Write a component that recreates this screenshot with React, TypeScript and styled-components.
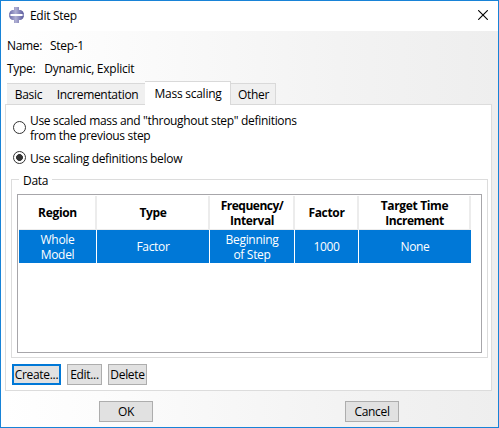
import React from "react";
import styled, { createGlobalStyle } from "styled-components";

const Global = createGlobalStyle`
  * { box-sizing: border-box; }
  body { margin: 0; overflow: hidden; }
`;

const Dialog = styled.div`
  width: 499px;
  height: 428px;
  border: 1px solid #1883d7;
  display: flex;
  flex-direction: column;
  background: linear-gradient(90deg, #ffffff 0%, #fcfcfc 20%, #f3f3f3 68%, #eeeeee 100%);
  font: 12px/15px "Open Sans", "Noto Sans", sans-serif;
  color: #000;
  white-space: nowrap;
`;

const TitleBar = styled.header`
  height: 30px;
  flex: none;
  display: flex;
  align-items: center;
  background: #fff;
  padding: 0 10px 2px 8px;
`;

const Title = styled.span`
  margin-left: 5px;
  padding-top: 1px;
  flex: 1;
  letter-spacing: -0.3px;
`;

const Text = styled.span<{ $spacing?: number }>`
  display: block;
  letter-spacing: ${(p) => p.$spacing ?? -0.32}px;
`;

const Info = styled.div`
  height: 50px;
  flex: none;
  padding: 3px 0 0 6px;
  line-height: 23px;
`;

const InfoRow = styled.div<{ $gap: number }>`
  display: flex;
  height: 23px;
  gap: ${(p) => p.$gap}px;
`;

const TabStrip = styled.nav`
  display: flex;
  align-items: flex-end;
  height: 24px;
  flex: none;
  margin: 0 0 -1px 6px;
`;

const Tab = styled.div<{ $width: number; $active?: boolean; $edge?: boolean }>`
  width: ${(p) => p.$width}px;
  height: ${(p) => (p.$active ? 24 : 22)}px;
  line-height: ${(p) => (p.$active ? 23 : 21)}px;
  padding-left: 1px;
  text-align: center;
  position: relative;
  z-index: 1;
  background: ${(p) => (p.$active ? "#fff" : "#f0f0f0")};
  border: solid #d9d9d9;
  border-width: ${(p) => (p.$active ? "1px 1px 0" : p.$edge ? "1px 1px 1px 0" : "1px 0 1px 0")};
  & + & { border-left-width: ${(p) => (p.$edge ? 0 : 1)}px; }
`;

const Panel = styled.main`
  width: 487px;
  height: 287px;
  flex: none;
  margin-left: 4px;
  border: 1px solid #dcdcdc;
  background: #fff;
  display: flex;
  flex-direction: column;
  padding: 7px 3px 5px 5px;
`;

const Option = styled.label<{ $height: number; $gap: number }>`
  display: flex;
  align-items: center;
  gap: 4px;
  padding-left: 2px;
  height: ${(p) => p.$height}px;
  margin-bottom: ${(p) => p.$gap}px;
`;

const OptionText = styled(Text)`
  padding-top: 2px;
`;

const Radio = styled.span<{ $on?: boolean }>`
  width: 13px;
  height: 13px;
  flex: none;
  border: 1px solid #333;
  border-radius: 50%;
  background: ${(p) => (p.$on ? "radial-gradient(circle, #333 0 3.1px, #fff 3.7px)" : "#fff")};
`;

const Group = styled.fieldset`
  margin: 0;
  height: 186px;
  width: 477px;
  min-width: 0;
  border: 1px solid #dcdcdc;
  padding: 7px 5px 5px;
`;

const Legend = styled.legend`
  margin-left: 2px;
  padding: 1px 4px 0;
  height: 15px;
`;

const TableBox = styled.div`
  width: 465px;
  height: 159px;
  border: 1px solid #a7a6aa;
  padding: 1px;
`;

const Grid = styled.div<{ $header?: boolean }>`
  display: grid;
  grid-template-columns: 78px 113px 85px 64px 112px;
  height: ${(p) => (p.$header ? 34 : 33)}px;
  width: 452px;
  color: ${(p) => (p.$header ? "#000" : "#fff")};
  background: ${(p) => (p.$header ? "#fff" : "#0078d7")};
  font-weight: ${(p) => (p.$header ? 700 : 400)};
`;

const HeadCell = styled.div`
  display: flex;
  flex-direction: column;
  align-items: center;
  justify-content: center;
  padding-left: 1px;
  border-right: 2px solid #ececec;
  border-bottom: 1px solid #ececec;
`;

const Cell = styled.div`
  display: flex;
  flex-direction: column;
  align-items: center;
  justify-content: center;
  border-right: 1px solid #fff;
  &:last-child { border-right: 0; }
`;

const Actions = styled.div`
  display: flex;
  gap: 6px;
  margin: 6px 0 0 1px;
`;

const Footer = styled.footer`
  display: flex;
  gap: 192px;
  padding: 10px 0 0 98px;
`;

const Button = styled.button<{ $width: number; $focus?: boolean }>`
  width: ${(p) => p.$width}px;
  height: 21px;
  padding: 0;
  display: flex;
  align-items: center;
  justify-content: center;
  font: inherit;
  color: #000;
  background: #e1e1e1;
  border: ${(p) => (p.$focus ? "2px solid #0078d7" : "1px solid #adadad")};
`;

const AppIcon = () => (
  <svg width="16" height="16" viewBox="0 0 16 16">
    <defs>
      <linearGradient id="steel">
        <stop offset="0" stopColor="#6a6aa8" />
        <stop offset=".45" stopColor="#b0b0d4" />
        <stop offset="1" stopColor="#55559a" />
      </linearGradient>
    </defs>
    <path d="M5 0h5v3h2l2 1.500 1 2.500H0l1-2.500L3 3h2z" fill="url(#steel)" />
    <path d="M0 9h15l-1 2.500L12 13h-2v3H5v-3H3l-2-1.500z" fill="url(#steel)" />
    <path d="M0 7h1.500v2H0zM13.500 7H15v2h-1.500z" fill="#8a8abc" />
  </svg>
);

const CloseIcon = () => (
  <svg width="10" height="10" viewBox="0 0 10 10">
    <path d="M.2.2l9.600 9.600M9.800.2L.2 9.800" stroke="#000" strokeWidth="1.100" />
  </svg>
);

export default function App() {
  return (
    <Dialog>
      <Global />
      <TitleBar>
        <AppIcon />
        <Title>Edit Step</Title>
        <CloseIcon />
      </TitleBar>
      <Info>
        <InfoRow $gap={8}><Text>Name:</Text><Text>Step-1</Text></InfoRow>
        <InfoRow $gap={9}><Text>Type:</Text><Text $spacing={-0.25}>Dynamic, Explicit</Text></InfoRow>
      </Info>
      <TabStrip>
        <Tab $width={42}><Text>Basic</Text></Tab>
        <Tab $width={96}><Text>Incrementation</Text></Tab>
        <Tab $width={86} $active><Text $spacing={-0.25}>Mass scaling</Text></Tab>
        <Tab $width={45} $edge><Text>Other</Text></Tab>
      </TabStrip>
      <Panel>
        <Option $height={30} $gap={8}>
          <Radio />
          <OptionText>Use scaled mass and "throughout step" definitions<br />from the previous step</OptionText>
        </Option>
        <Option $height={15} $gap={7}>
          <Radio $on />
          <OptionText>Use scaling definitions below</OptionText>
        </Option>
        <Group>
          <Legend><Text>Data</Text></Legend>
          <TableBox>
            <Grid $header>
              <HeadCell><Text>Region</Text></HeadCell>
              <HeadCell><Text>Type</Text></HeadCell>
              <HeadCell><Text $spacing={-0.5}>Frequency/</Text><Text $spacing={-0.4}>Interval</Text></HeadCell>
              <HeadCell><Text>Factor</Text></HeadCell>
              <HeadCell><Text $spacing={-0.35}>Target Time</Text><Text $spacing={-0.45}>Increment</Text></HeadCell>
            </Grid>
            <Grid>
              <Cell><Text>Whole</Text><Text>Model</Text></Cell>
              <Cell><Text>Factor</Text></Cell>
              <Cell><Text>Beginning</Text><Text>of Step</Text></Cell>
              <Cell><Text>1000</Text></Cell>
              <Cell><Text>None</Text></Cell>
            </Grid>
          </TableBox>
        </Group>
        <Actions>
          <Button $width={49} $focus><Text>Create...</Text></Button>
          <Button $width={35}><Text>Edit...</Text></Button>
          <Button $width={39}><Text>Delete</Text></Button>
        </Actions>
      </Panel>
      <Footer>
        <Button $width={54}><Text>OK</Text></Button>
        <Button $width={54}><Text>Cancel</Text></Button>
      </Footer>
    </Dialog>
  );
}
